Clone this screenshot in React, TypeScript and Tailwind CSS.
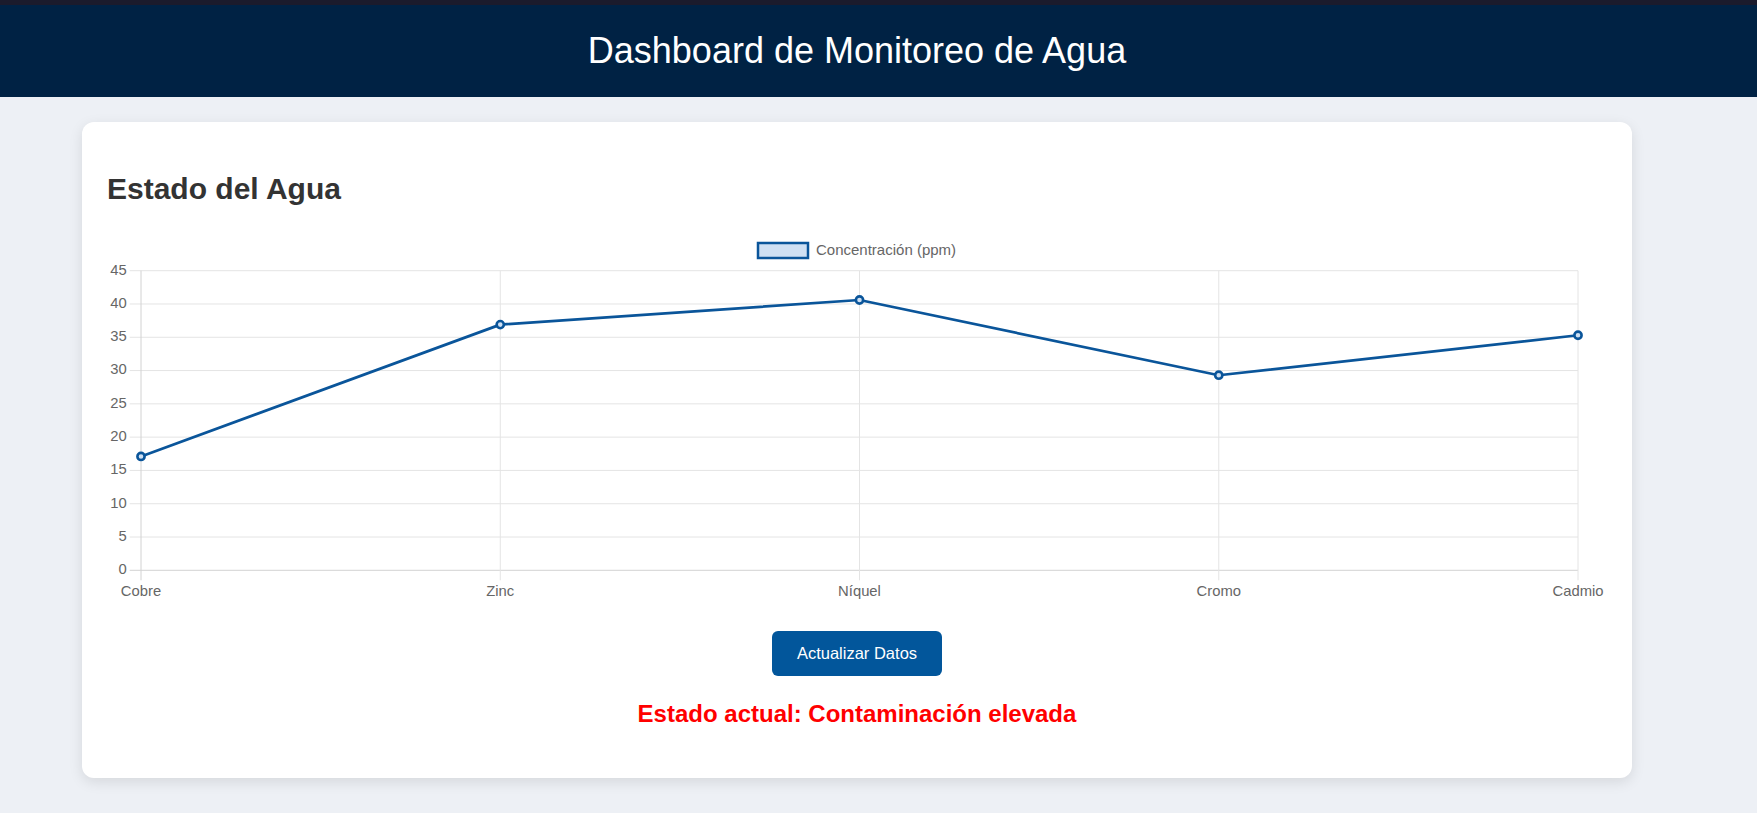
import React from "react";

const LABELS = ["Cobre", "Zinc", "Níquel", "Cromo", "Cadmio"];
const VALUES = [17.1, 36.9, 40.6, 29.3, 35.3];
const TICKS = [0, 5, 10, 15, 20, 25, 30, 35, 40, 45];

// plot geometry, in svg space
const LEFT = 34;
const STEP = 359.25;
const RIGHT = LEFT + STEP * 4;
const ZERO = 355.3;
const PER_UNIT = 6.658;
const TOP = ZERO - 45 * PER_UNIT;

const xAt = (i: number) => LEFT + i * STEP;
const yAt = (v: number) => ZERO - v * PER_UNIT;

const LINE = "#0a559a";
const GRID = "#e4e4e4";

const WaterChart = () => {
  const points = VALUES.map((v, i) => `${xAt(i)},${yAt(v)}`).join(" ");

  return (
    <svg
      width={1500}
      height={395}
      viewBox="0 0 1500 395"
      className="block"
      style={{ fontFamily: '"Liberation Sans", Arial, sans-serif' }}
    >
      {/* legend */}
      <rect x={651} y={28} width={50} height={15} fill="#cfe0f3" stroke={LINE} strokeWidth={2.5} />
      <text x={709} y={36} fontSize={15} fill="#666" dominantBaseline="middle">
        Concentración (ppm)
      </text>

      {/* horizontal grid + y ticks */}
      {TICKS.map((t) => (
        <g key={t}>
          <line
            x1={22.7}
            x2={RIGHT}
            y1={yAt(t)}
            y2={yAt(t)}
            stroke={t === 0 ? "#d2d2d2" : GRID}
            strokeWidth={1}
          />
          <text
            x={19.7}
            y={yAt(t)}
            fontSize={14.8}
            fill="#666"
            textAnchor="end"
            dominantBaseline="middle"
          >
            {t}
          </text>
        </g>
      ))}

      {/* vertical grid + x labels */}
      {LABELS.map((l, i) => (
        <g key={l}>
          <line
            x1={xAt(i)}
            x2={xAt(i)}
            y1={TOP}
            y2={ZERO + 10}
            stroke={i === 0 ? "#d2d2d2" : GRID}
            strokeWidth={1}
          />
          <text
            x={xAt(i)}
            y={376.7}
            fontSize={14.8}
            fill="#666"
            textAnchor="middle"
            dominantBaseline="middle"
          >
            {l}
          </text>
        </g>
      ))}

      <polyline points={points} fill="none" stroke={LINE} strokeWidth={2.7} strokeLinejoin="round" />
      {VALUES.map((v, i) => (
        <circle key={i} cx={xAt(i)} cy={yAt(v)} r={3.6} fill="#cfe0f3" stroke={LINE} strokeWidth={2.6} />
      ))}
    </svg>
  );
};

const App = () => {
  return (
    <div className="min-h-screen bg-[#edf0f5] font-['Liberation_Sans',Arial,sans-serif]">
      <div className="h-[5px] bg-[#1b1b2c]" />
      <header className="bg-[#002244] pt-[28px] pr-[43px] pb-[28px] text-center">
        <h1 className="text-[36px] leading-none font-normal text-white">
          Dashboard de Monitoreo de Agua
        </h1>
      </header>

      <main className="pl-[82px] pt-[25px]">
        <section className="flex w-[1550px] flex-col rounded-[12px] bg-white px-[25px] pt-[52px] pb-[52px] shadow-[0_4px_14px_rgba(0,0,0,0.1)]">
          <h2 className="text-[30px] leading-none font-bold text-[#333]">
            Estado del Agua
          </h2>

          <div className="mt-[11px]">
            <WaterChart />
          </div>

          <div className="mt-[21px] flex justify-center">
            <button
              type="button"
              className="h-[45px] w-[170px] rounded-[6px] bg-[#02569b] text-[16.5px] text-white"
            >
              Actualizar Datos
            </button>
          </div>

          <p className="mt-[26px] text-center text-[24px] leading-none font-bold text-[#ff0000]">
            Estado actual: Contaminación elevada
          </p>
        </section>
      </main>
    </div>
  );
};

export default App;
